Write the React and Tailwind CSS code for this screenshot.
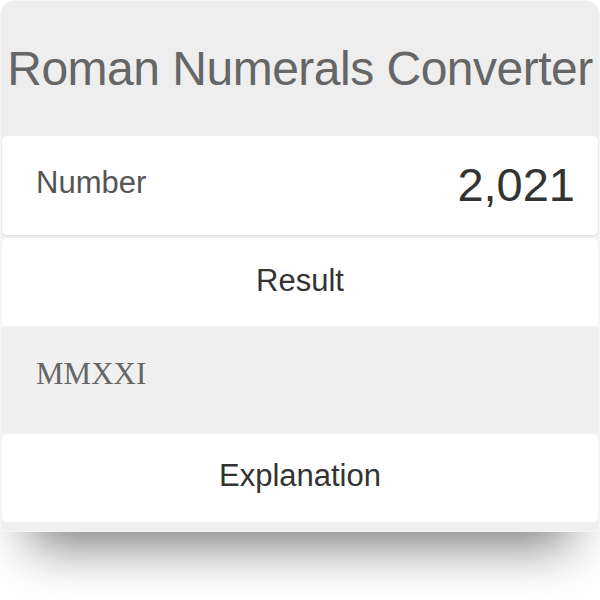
export default function App() {
  return (
    <div className="w-[600px] h-[600px] bg-white font-['Liberation_Sans',Arial,sans-serif]">
      <div className="w-[600px] h-[532px] flex flex-col rounded-t-[14px] bg-[#f0f0f0] border border-[#f6f6f6] shadow-[0_42px_50px_-30px_rgba(0,0,0,0.55)]">
        {/* Header */}
        <div className="h-[135px] flex items-center justify-center bg-[#eeeeee] rounded-t-[14px]">
          <h1 className="text-[48px] text-[#666666] tracking-[-0.5px]">Roman Numerals Converter</h1>
        </div>

        {/* Input */}
        <div className="mx-[1px] h-[99px] flex items-center justify-between pl-[34px] pr-[23px] bg-white rounded-[5px] shadow-[0_1px_2px_rgba(0,0,0,0.08)]">
          <span className="text-[31px] text-[#555555] pb-[4px]">Number</span>
          <span className="text-[47px] text-[#333333]">2,021</span>
        </div>

        {/* Result */}
        <div className="mt-[3px] mx-[1px] h-[88px] flex items-center justify-center bg-white rounded-t-[5px]">
          <span className="text-[31px] text-[#333333] pb-[2px]">Result</span>
        </div>
        <div className="mx-[1px] h-[108px] flex items-center px-[34px] pb-[12px] bg-[#f0f0f0]">
          <span className="text-[31px] text-[#666666] font-['Liberation_Serif','Times_New_Roman',serif]">MMXXI</span>
        </div>

        {/* Explanation */}
        <div className="mx-[1px] h-[88px] flex items-center justify-center bg-white rounded-[5px]">
          <span className="text-[31px] text-[#333333] pb-[4px]">Explanation</span>
        </div>
      </div>
    </div>
  );
}
